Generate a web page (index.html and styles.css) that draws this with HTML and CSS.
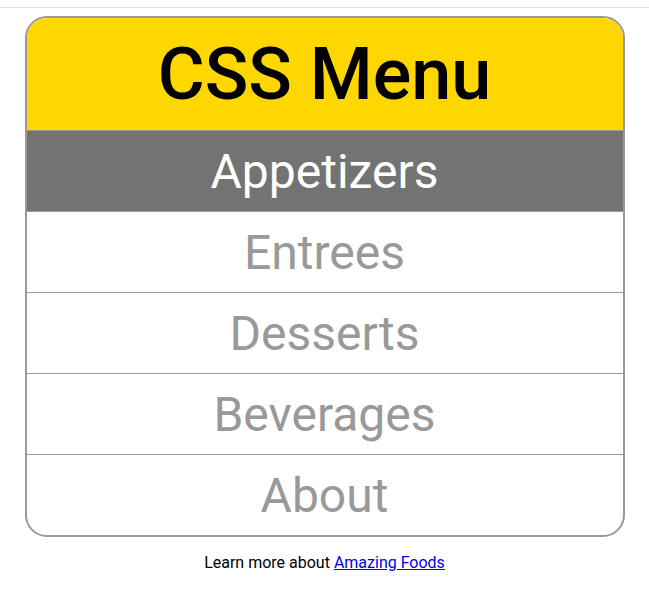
FILE: index.html
```html
<!DOCTYPE html>
<html>
<head>
<meta charset="utf-8">
<link rel="stylesheet" href="styles.css">
</head>
<body>
<div class="topline"></div>
<div class="menu">
  <div class="menu-header">CSS Menu</div>
  <div class="menu-item active">Appetizers</div>
  <div class="menu-item">Entrees</div>
  <div class="menu-item">Desserts</div>
  <div class="menu-item">Beverages</div>
  <div class="menu-item">About</div>
</div>
<p class="footer">Learn more about <a href="#">Amazing Foods</a></p>
</body>
</html>
```
FILE: styles.css
```css
html, body {
  margin: 0;
  padding: 0;
  background: #fff;
  font-family: Roboto, "Liberation Sans", sans-serif;
}
.topline {
  height: 1px;
  margin-top: 7px;
  background: #dddddd;
}
.menu {
  width: 596px;
  margin: 8px auto 0;
  border: 2px solid #999;
  border-radius: 22px;
  overflow: hidden;
}
.menu-header {
  background: #ffd700;
  color: #000;
  font-size: 72px;
  font-weight: 500;
  text-align: center;
  padding: 15px 0 13px;
  height: 84px;
  line-height: 84px;
}
.menu-item {
  border-top: 1px solid #999;
  font-size: 48px;
  color: #999;
  text-align: center;
  height: 56px;
  line-height: 56px;
  padding: 13px 0 11px;
}
.menu-item.active {
  background: #737373;
  color: #fff;
}
.footer {
  margin: 16px 0 0;
  text-align: center;
  font-size: 16px;
  color: #000;
}
.footer a {
  color: #0000ee;
}
```
